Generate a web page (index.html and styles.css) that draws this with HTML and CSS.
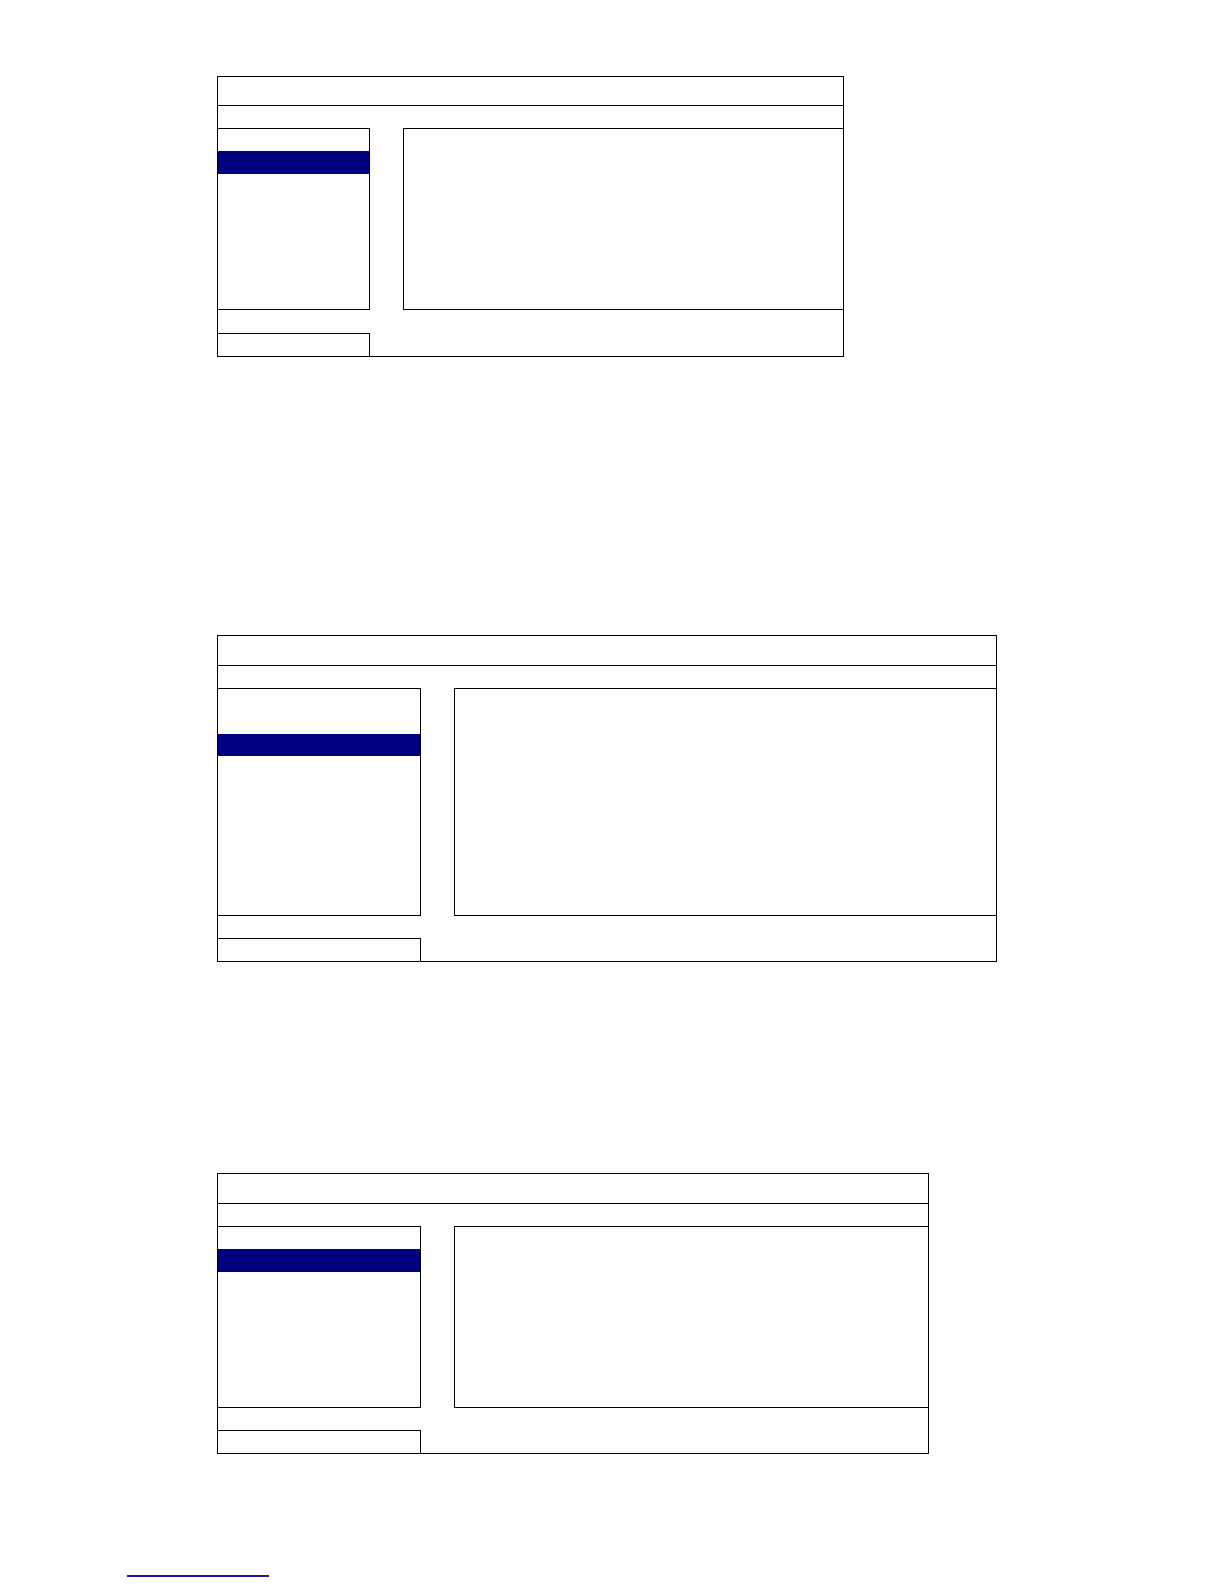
FILE: index.html
```html
<!DOCTYPE html>
<html lang="en">
<head>
<meta charset="utf-8">
<title>Menu screens</title>
<link rel="stylesheet" href="styles.css">
</head>
<body>
<main class="page">
  <section class="screen screen-a">
    <div class="title-bar"></div>
    <div class="sub-bar"></div>
    <div class="menu">
      <div class="menu-item"></div>
      <div class="menu-item menu-item-active"></div>
    </div>
    <div class="spacer"></div>
    <div class="panel"></div>
    <div class="status-bar"></div>
    <div class="footer-cell"></div>
    <div class="footer-rest"></div>
  </section>

  <section class="screen screen-b">
    <div class="title-bar"></div>
    <div class="sub-bar"></div>
    <div class="menu">
      <div class="menu-item"></div>
      <div class="menu-item menu-item-tall"></div>
      <div class="menu-item menu-item-active"></div>
    </div>
    <div class="spacer"></div>
    <div class="panel"></div>
    <div class="status-bar"></div>
    <div class="footer-cell"></div>
    <div class="footer-rest"></div>
  </section>

  <section class="screen screen-c">
    <div class="title-bar"></div>
    <div class="sub-bar"></div>
    <div class="menu">
      <div class="menu-item"></div>
      <div class="menu-item menu-item-active"></div>
    </div>
    <div class="spacer"></div>
    <div class="panel"></div>
    <div class="status-bar"></div>
    <div class="footer-cell"></div>
    <div class="footer-rest"></div>
  </section>

  <div class="footnote-rule"></div>
</main>
</body>
</html>
```

FILE: styles.css
```css
html, body {
  margin: 0;
  padding: 0;
  background: #ffffff;
  font-family: "Liberation Sans", Arial, sans-serif;
}

.page {
  display: flex;
  flex-direction: column;
  align-items: flex-start;
  padding: 76px 0 8px 217px;
}

.screen {
  display: grid;
  box-sizing: border-box;
  border: 1px solid #000;
}

.screen-a {
  width: 627px;
  grid-template-columns: 152px 33px 1fr;
  grid-template-rows: 29px 22px 182px 23px 23px;
}

.screen-b {
  width: 780px;
  margin-top: 278px;
  grid-template-columns: 203px 33px 1fr;
  grid-template-rows: 30px 22px 228px 22px 23px;
}

.screen-c {
  width: 712px;
  margin-top: 211px;
  grid-template-columns: 203px 33px 1fr;
  grid-template-rows: 30px 22px 182px 22px 23px;
}

.title-bar {
  grid-column: 1 / -1;
  border-bottom: 1px solid #000;
}

.sub-bar {
  grid-column: 1 / -1;
}

.menu {
  display: flex;
  flex-direction: column;
  border-top: 1px solid #000;
  border-right: 1px solid #000;
  border-bottom: 1px solid #000;
}

.menu-item {
  height: 22px;
  flex: none;
}

.menu-item-tall {
  height: 23px;
}

.menu-item-active {
  height: 23px;
  background: #000080;
}

.screen-b .menu-item-active {
  height: 22px;
}

.panel {
  border-top: 1px solid #000;
  border-left: 1px solid #000;
  border-bottom: 1px solid #000;
}

.status-bar {
  grid-column: 1 / -1;
}

.footer-cell {
  border-top: 1px solid #000;
  border-right: 1px solid #000;
}

.footer-rest {
  grid-column: 2 / -1;
}

.footnote-rule {
  width: 142px;
  height: 2px;
  margin: 121px 0 0 -90px;
  background: #1a1a99;
}
```
